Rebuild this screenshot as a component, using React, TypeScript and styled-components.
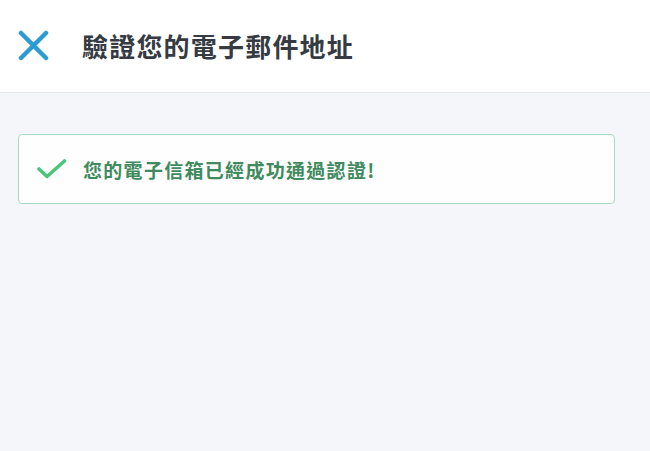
import React from "react";
import styled, { createGlobalStyle } from "styled-components";

const GlobalStyle = createGlobalStyle`
  html, body {
    margin: 0;
    padding: 0;
    background: #f5f6fa;
  }
  body {
    font-family: "Noto Sans CJK TC", "Noto Sans", sans-serif;
  }
`

const Page = styled.div`
  min-height: 451px;
  background: #f5f6fa;
`

const Header = styled.header`
  height: 93px;
  box-sizing: border-box;
  background: #ffffff;
  border-bottom: 1px solid #e6e7eb;
  display: flex;
  align-items: center;
  padding-left: 18px;
  padding-bottom: 2px;
`

const CloseButton = styled.button`
  width: 31px;
  height: 31px;
  padding: 0;
  border: none;
  background: none;
  display: flex;
  align-items: center;
  justify-content: center;
  cursor: pointer;
`

const Title = styled.h1`
  margin: 0 0 0 33px;
  font-size: 26px;
  font-weight: 700;
  letter-spacing: 1.2px;
  color: #363b43;
`

const Content = styled.main`
  padding: 41px 35px 0 18px;
`

const Alert = styled.div`
  height: 70px;
  box-sizing: border-box;
  background: #fdfefd;
  border: 1.5px solid #a8dcc2;
  border-radius: 4px;
  display: flex;
  align-items: center;
  padding-left: 18px;
`

const Message = styled.span`
  margin-left: 16px;
  font-size: 19px;
  font-weight: 700;
  letter-spacing: 1.3px;
  color: #3f8a5e;
`

const App: React.FC = () => {
    return (
        <>
            <GlobalStyle/>
            <Page>
                <Header>
                    <CloseButton aria-label="close">
                        <svg width="31" height="31" viewBox="0 0 31 31">
                            <path d="M3 3 L28 28 M28 3 L3 28" stroke="#2c9bd3" strokeWidth="4.5" strokeLinecap="round"/>
                        </svg>
                    </CloseButton>
                    <Title>驗證您的電子郵件地址</Title>
                </Header>
                <Content>
                    <Alert>
                        <svg width="30" height="20" viewBox="0 0 30 20">
                            <path d="M2 10 L10 17.5 L27.5 2" fill="none" stroke="#4cc57c" strokeWidth="3.6" strokeLinecap="round" strokeLinejoin="round"/>
                        </svg>
                        <Message>您的電子信箱已經成功通過認證!</Message>
                    </Alert>
                </Content>
            </Page>
        </>
    );
}

export default App;
